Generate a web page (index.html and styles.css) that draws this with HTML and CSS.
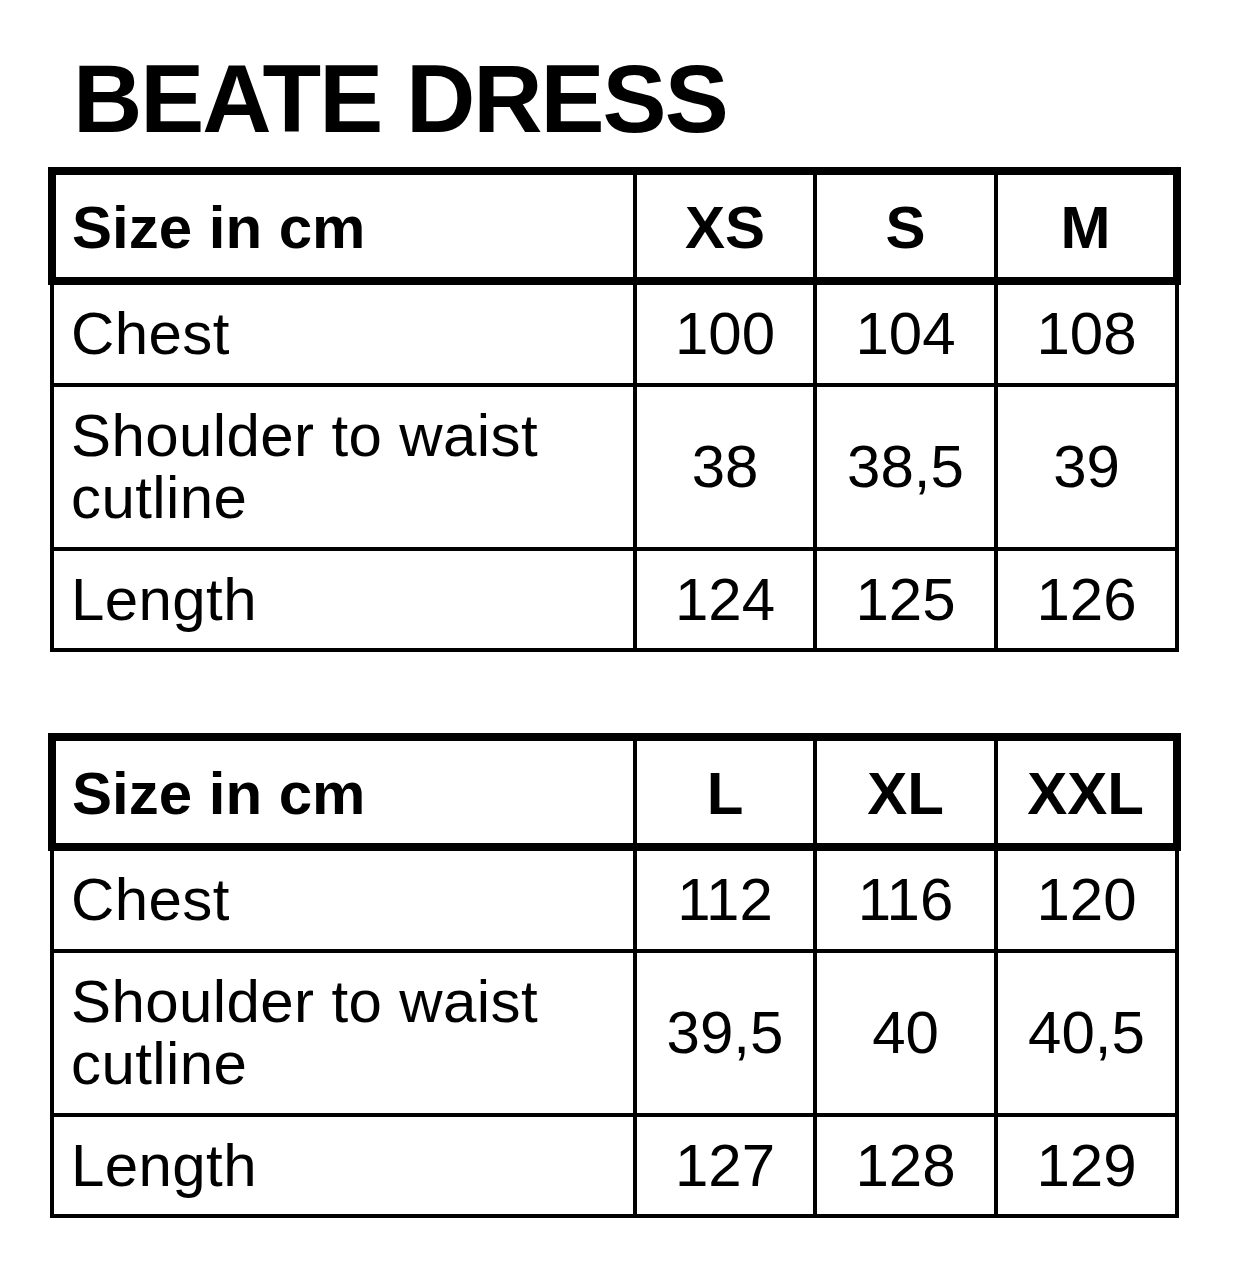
FILE: index.html
```html
<!DOCTYPE html>
<html lang="en">
<head>
<meta charset="utf-8">
<title>Beate Dress size chart</title>
<link rel="stylesheet" href="styles.css">
</head>
<body>
<main class="page">
  <h1 class="title">BEATE DRESS</h1>

  <section class="chart">
    <div class="chart-head">
      <div class="cell label">Size in cm</div>
      <div class="cell num">XS</div>
      <div class="cell num">S</div>
      <div class="cell num">M</div>
    </div>
    <div class="chart-body">
      <div class="cell label row-a">Chest</div>
      <div class="cell num row-a">100</div>
      <div class="cell num row-a">104</div>
      <div class="cell num row-a">108</div>
      <div class="cell label row-b">Shoulder to waist<br>cutline</div>
      <div class="cell num row-b">38</div>
      <div class="cell num row-b">38,5</div>
      <div class="cell num row-b">39</div>
      <div class="cell label row-c">Length</div>
      <div class="cell num row-c">124</div>
      <div class="cell num row-c">125</div>
      <div class="cell num row-c">126</div>
    </div>
  </section>

  <section class="chart chart-second">
    <div class="chart-head">
      <div class="cell label">Size in cm</div>
      <div class="cell num">L</div>
      <div class="cell num">XL</div>
      <div class="cell num">XXL</div>
    </div>
    <div class="chart-body">
      <div class="cell label row-a">Chest</div>
      <div class="cell num row-a">112</div>
      <div class="cell num row-a">116</div>
      <div class="cell num row-a">120</div>
      <div class="cell label row-b">Shoulder to waist<br>cutline</div>
      <div class="cell num row-b">39,5</div>
      <div class="cell num row-b">40</div>
      <div class="cell num row-b">40,5</div>
      <div class="cell label row-c">Length</div>
      <div class="cell num row-c">127</div>
      <div class="cell num row-c">128</div>
      <div class="cell num row-c">129</div>
    </div>
  </section>
</main>
</body>
</html>
```

FILE: styles.css
```css
html, body {
  margin: 0;
  padding: 0;
  background: #ffffff;
}

body {
  font-family: "Liberation Sans", Arial, Helvetica, sans-serif;
  color: #000000;
}

.page {
  padding: 51px 55px 40px 48px;
  width: 1133px;
}

.title {
  margin: 0 0 20px 25px;
  font-size: 96px;
  line-height: 96px;
  font-weight: 700;
  letter-spacing: -2px;
}

.chart-second {
  margin-top: 81px;
}

.chart-head {
  display: grid;
  grid-template-columns: 1fr 176px 177px 175px;
  grid-template-rows: 102px;
  column-gap: 4px;
  border: 8px solid #000;
  background: #000;
}

.chart-body {
  display: grid;
  grid-template-columns: 1fr 176px 177px 177px;
  grid-template-rows: 98px 160px 97px;
  gap: 4px;
  margin: 0 2px;
  border: 4px solid #000;
  border-top: none;
  background: #000;
}

.cell {
  background: #fff;
  display: flex;
  align-items: center;
  font-size: 60px;
  line-height: 62px;
}

.label {
  padding: 0 15px 0 17px;
  letter-spacing: 0.4px;
}

.num {
  justify-content: center;
}

.chart-head .cell {
  font-weight: 700;
  padding-top: 4px;
}

.chart-head .label {
  padding-left: 16px;
  letter-spacing: 0;
}
```
